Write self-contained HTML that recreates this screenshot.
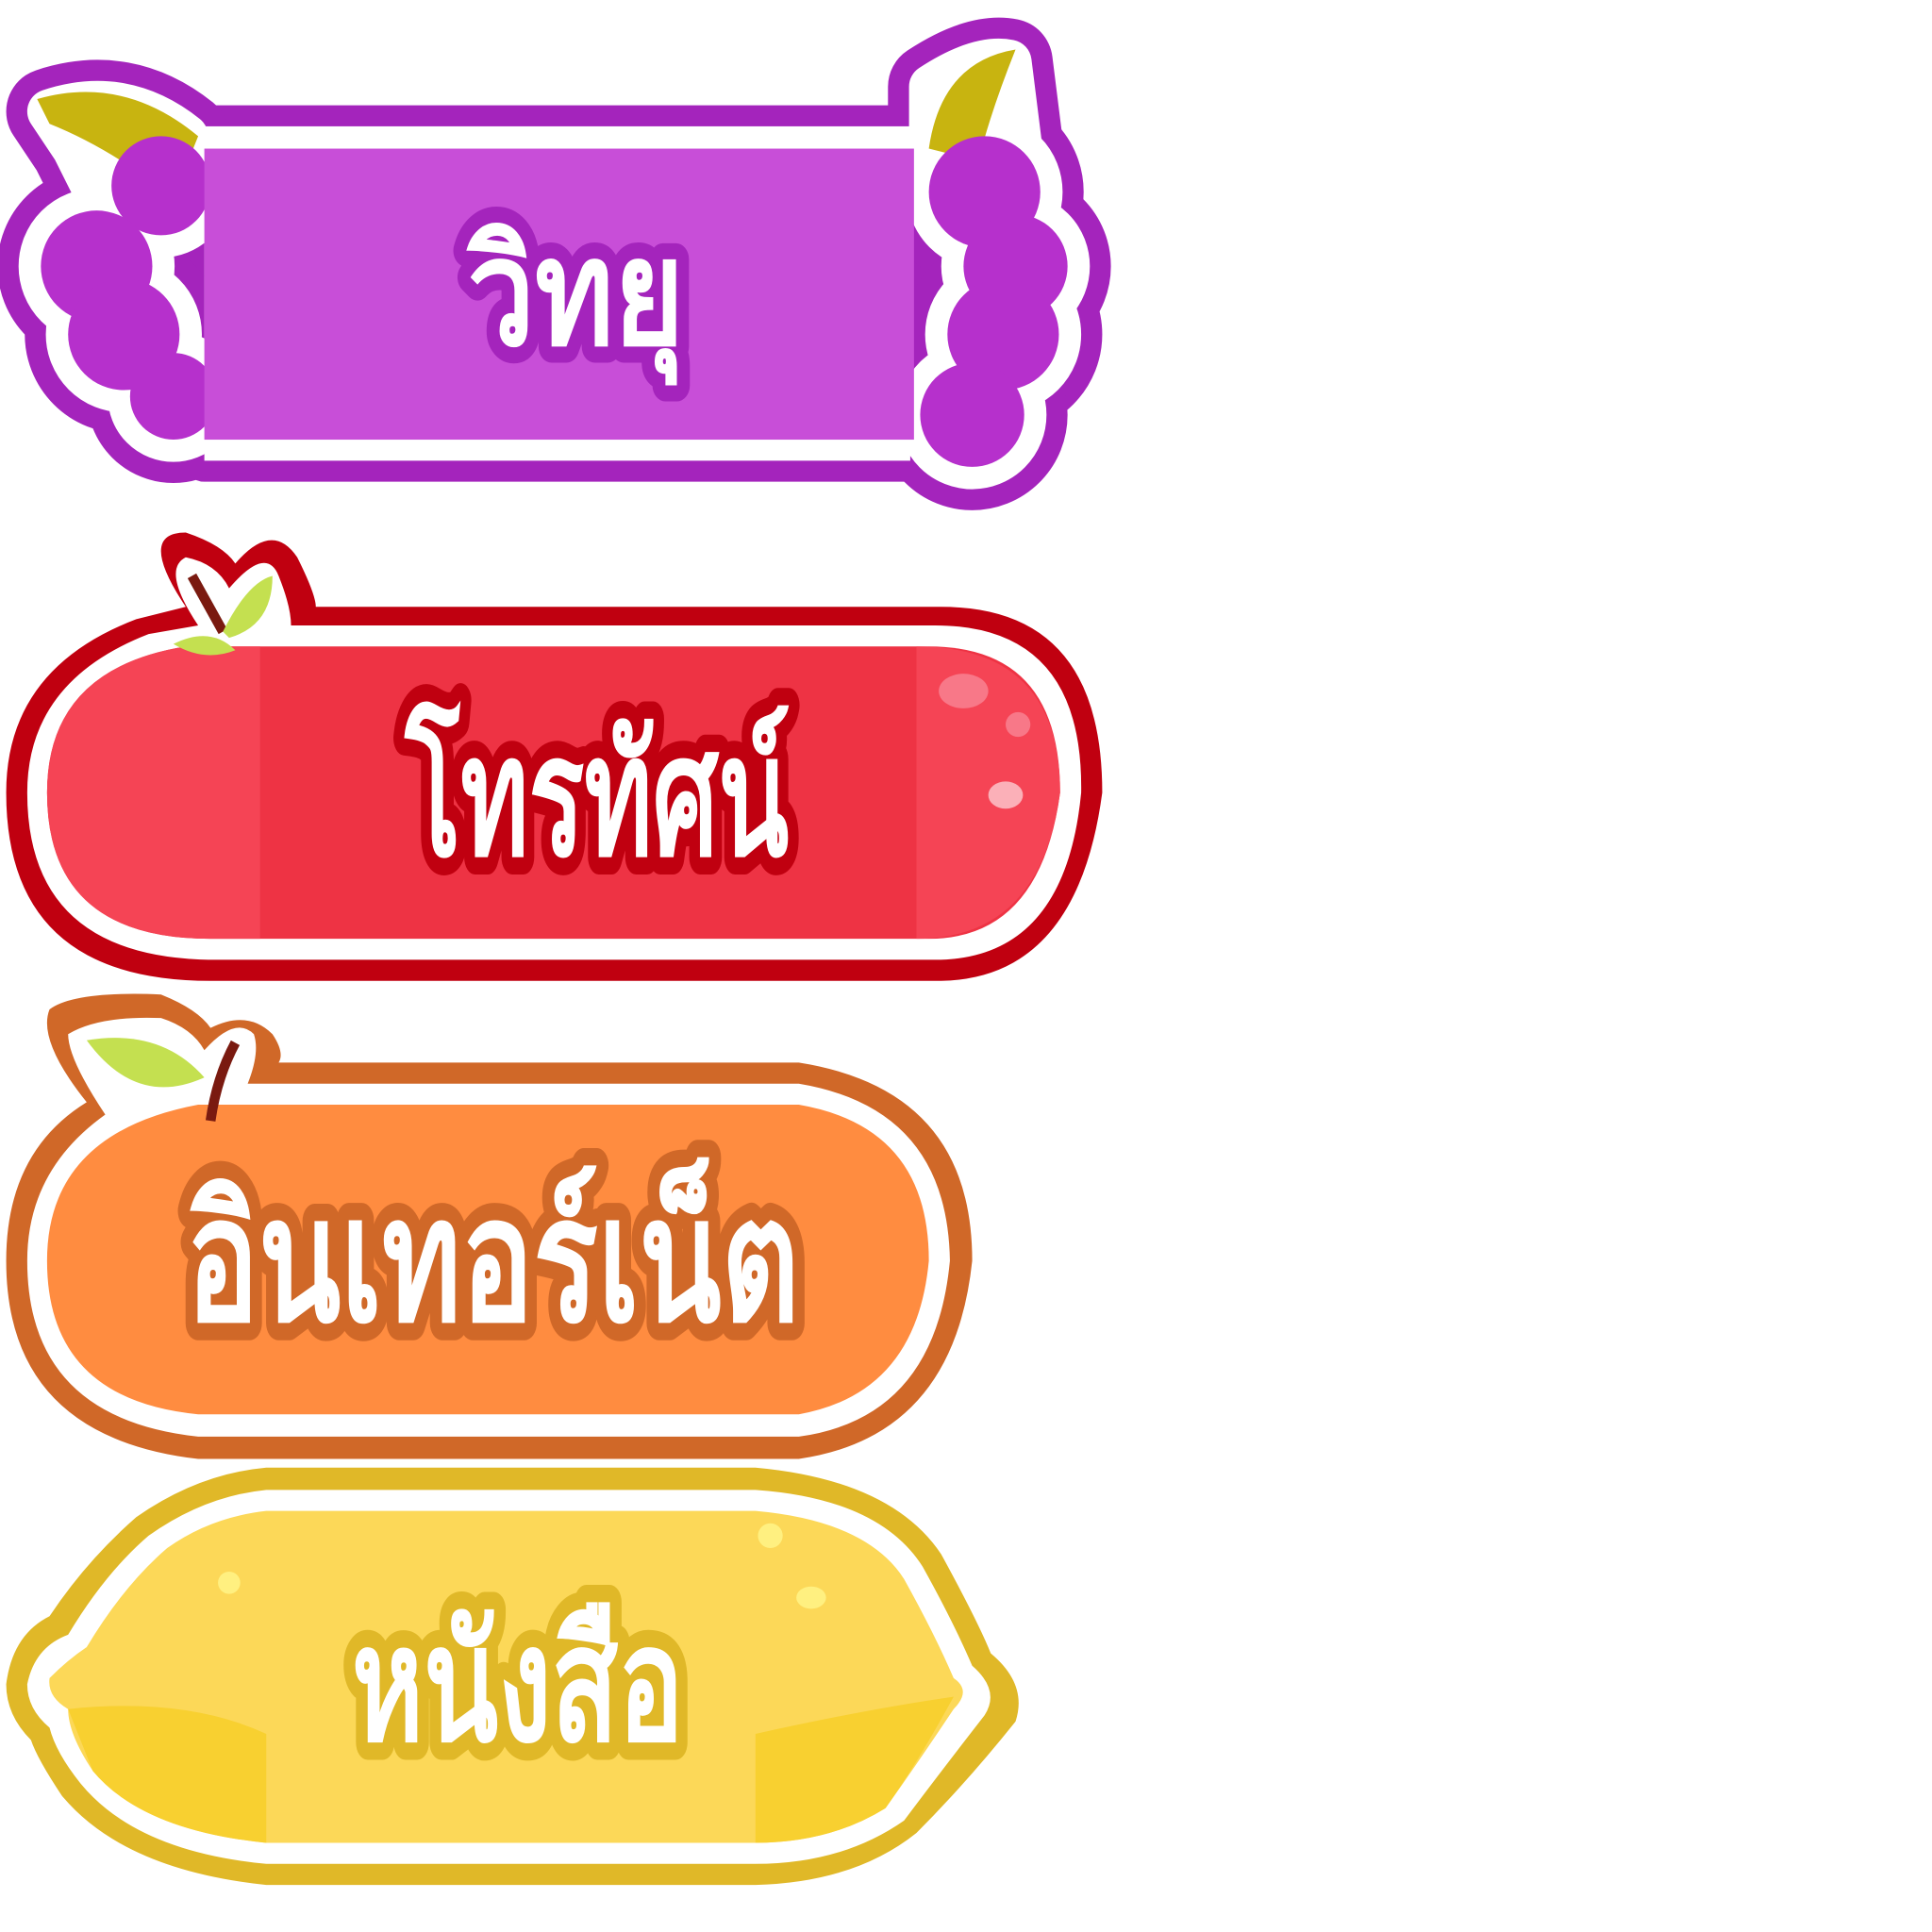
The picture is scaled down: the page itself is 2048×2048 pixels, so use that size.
<!DOCTYPE html>
<html><head><meta charset="utf-8">
<style>
html,body{margin:0;padding:0;background:#fff;width:2048px;height:2048px;overflow:hidden}
svg{display:block}
.t{font-family:"Liberation Sans","DejaVu Sans",sans-serif;font-weight:bold;fill:#fff;paint-order:stroke;stroke-linejoin:round;text-anchor:middle}
</style></head><body>
<svg width="2048" height="2048" viewBox="0 0 1560 1560" xmlns="http://www.w3.org/2000/svg">
<defs>
 <rect id="grect" x="165" y="102" width="570" height="270"/>
 <g id="gshape">
  <circle cx="130" cy="150" r="40"/><circle cx="78" cy="215" r="45"/><circle cx="100" cy="270" r="45"/><circle cx="140" cy="320" r="35"/>
  <path d="M40 90 Q100 70 150 110 L160 160 L80 160 L60 120Z"/>
  <circle cx="795" cy="155" r="45"/><circle cx="820" cy="215" r="42"/><circle cx="810" cy="270" r="45"/><circle cx="785" cy="335" r="42"/>
  <path d="M752 70 Q790 45 815 50 L825 130 L752 130Z"/>
 </g>
</defs>
<!-- GRAPE -->
<g>
 <use href="#grect" fill="#a424bc" stroke="#a424bc" stroke-width="34" stroke-linejoin="round"/>
 <use href="#gshape" fill="#a424bc" stroke="#a424bc" stroke-width="70" stroke-linejoin="round"/>
 <use href="#grect" fill="#fff"/>
 <use href="#gshape" fill="#fff" stroke="#fff" stroke-width="36" stroke-linejoin="round"/>
 <path d="M30 80 Q100 60 160 110 L140 160 Q90 120 40 100Z" fill="#c8b410"/>
 <path d="M750 120 Q760 50 820 40 Q800 90 790 130Z" fill="#c8b410"/>
 <g fill="#b630cc">
  <circle cx="130" cy="150" r="40"/><circle cx="78" cy="215" r="45"/><circle cx="100" cy="270" r="45"/><circle cx="140" cy="320" r="35"/>
  <circle cx="795" cy="155" r="45"/><circle cx="820" cy="215" r="42"/><circle cx="810" cy="270" r="45"/><circle cx="785" cy="335" r="42"/>
 </g>
 <rect x="165" y="120" width="573" height="235" fill="#c84ed8"/>
 <text class="t" x="465" y="278" font-size="120" stroke="#a424bc" stroke-width="26" textLength="175" lengthAdjust="spacingAndGlyphs">วิทยุ</text>
</g>
<!-- APPLE -->
<g>
 <path d="M150 490 Q110 430 150 430 Q180 440 190 455 Q220 420 240 450 Q255 480 255 490 L760 490 Q890 490 890 640 Q870 790 760 792 L170 792 Q5 792 5 640 Q5 540 110 500Z" fill="#c00010"/>
 <path d="M160 505 Q130 460 150 450 Q175 455 185 475 Q215 440 225 465 Q235 490 235 505 L755 505 Q875 505 873 640 Q860 775 755 775 L175 775 Q22 775 22 640 Q22 550 120 512Z" fill="#fff"/>
 <path d="M180 522 L750 522 Q856 522 856 640 Q840 758 750 758 L170 758 Q38 758 38 640 Q38 540 150 522Z" fill="#ee3344"/>
 <path d="M38 640 Q38 540 150 522 L210 522 L210 758 L170 758 Q38 758 38 640Z" fill="#f54455"/>
 <path d="M740 522 Q856 522 856 640 Q840 758 740 758Z" fill="#f54455"/>
 <path d="M155 465 L180 510" stroke="#7a1a10" stroke-width="8"/>
 <path d="M140 520 Q170 505 190 525 Q165 535 140 520Z M180 510 Q200 470 220 465 Q220 505 185 515Z" fill="#c4e050"/>
 <ellipse cx="778" cy="558" rx="20" ry="14" fill="#f87888"/><circle cx="822" cy="585" r="10" fill="#f87888"/><ellipse cx="812" cy="642" rx="14" ry="11" fill="#fbb0b8"/>
 <text class="t" x="482" y="690" font-size="135" stroke="#c00010" stroke-width="28" textLength="310" lengthAdjust="spacingAndGlyphs">โทรทัศน์</text>
</g>
<!-- ORANGE -->
<g>
 <path d="M70 890 Q30 840 40 815 Q60 800 130 803 Q160 815 170 830 Q200 815 220 835 Q230 850 225 858 L645 858 Q785 880 785 1018 Q770 1160 645 1178 L160 1178 Q5 1160 5 1018 Q5 930 70 890Z" fill="#d06828"/>
 <path d="M85 900 Q55 855 55 835 Q80 820 130 822 Q155 830 165 848 Q190 820 205 835 Q210 850 200 875 L645 875 Q765 895 767 1018 Q755 1145 645 1160 L160 1160 Q22 1145 22 1018 Q22 945 85 900Z" fill="#fff"/>
 <path d="M160 892 L645 892 Q750 910 750 1018 Q740 1125 645 1142 L160 1142 Q38 1130 38 1018 Q38 915 160 892Z" fill="#ff8c40"/>
 <path d="M70 840 Q130 830 165 870 Q110 895 70 840Z" fill="#c4e050"/>
 <path d="M170 905 Q175 870 190 842" stroke="#7a1a10" stroke-width="8" fill="none"/>
 <text class="t" x="398" y="1066" font-size="140" stroke="#d06828" stroke-width="28" textLength="495" lengthAdjust="spacingAndGlyphs">อินเทอร์เน็ต</text>
</g>
<!-- LEMON -->
<g>
 <path d="M215 1185 L610 1185 Q720 1195 760 1255 Q790 1310 800 1335 Q830 1360 820 1390 Q780 1440 740 1480 Q690 1520 610 1522 L215 1522 Q100 1510 50 1450 Q30 1420 25 1405 Q5 1385 5 1360 Q10 1320 40 1305 Q70 1260 110 1225 Q160 1190 215 1185Z" fill="#e0b828"/>
 <path d="M215 1203 L610 1203 Q710 1210 745 1265 Q770 1310 785 1345 Q808 1365 795 1385 Q760 1430 730 1470 Q680 1505 610 1505 L215 1505 Q110 1495 65 1440 Q45 1415 40 1395 Q22 1380 22 1360 Q28 1330 55 1320 Q85 1270 120 1240 Q165 1208 215 1203Z" fill="#fff"/>
 <path d="M215 1220 L610 1220 Q700 1228 730 1275 Q755 1320 770 1355 Q785 1365 770 1380 Q740 1425 715 1460 Q670 1488 610 1488 L215 1488 Q115 1478 75 1430 Q55 1400 55 1380 Q38 1370 40 1355 Q55 1340 70 1330 Q100 1280 135 1250 Q170 1225 215 1220Z" fill="#fcd858"/>
 <path d="M55 1380 Q150 1370 215 1400 L215 1488 Q115 1478 75 1430Z M610 1400 Q700 1380 770 1370 Q740 1425 715 1460 Q670 1488 610 1488Z" fill="#f8d030"/>
 <circle cx="185" cy="1278" r="9" fill="#fff080"/><circle cx="622" cy="1240" r="10" fill="#fff080"/><ellipse cx="655" cy="1290" rx="12" ry="9" fill="#fff080"/>
 <text class="t" x="418" y="1405" font-size="130" stroke="#e0b828" stroke-width="28" textLength="268" lengthAdjust="spacingAndGlyphs">หนังสือ</text>
</g>
</svg>
</body></html>
